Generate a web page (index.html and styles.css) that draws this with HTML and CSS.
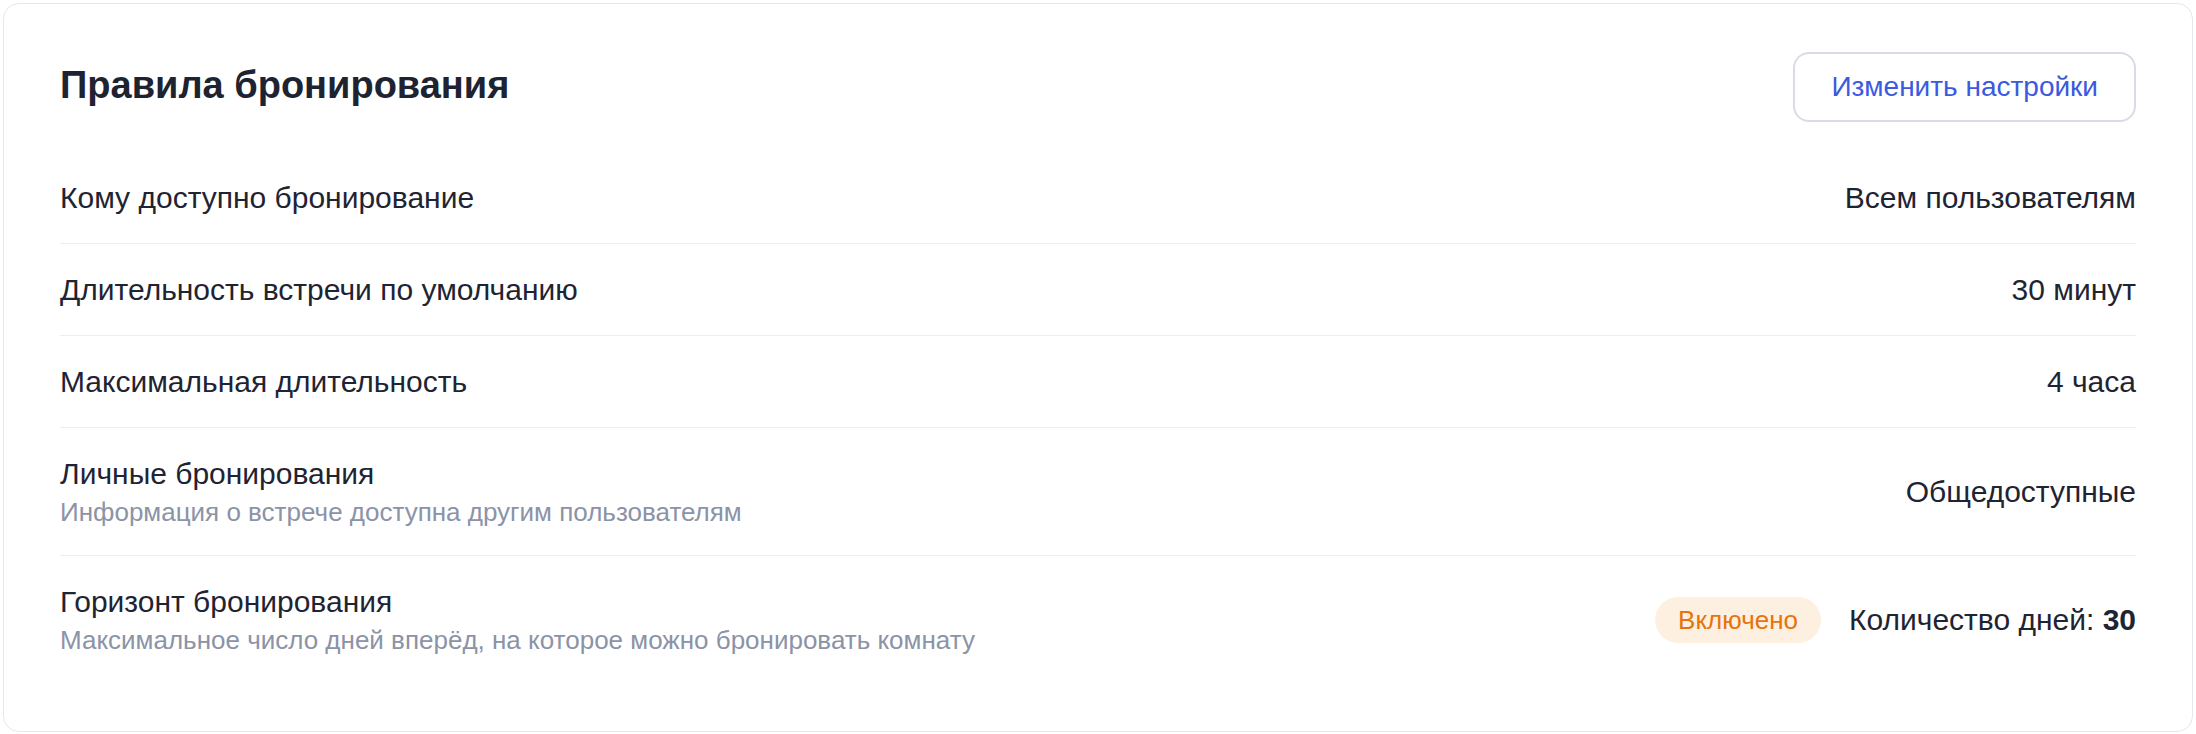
FILE: index.html
```html
<!DOCTYPE html>
<html lang="ru">

<head>
    <meta charset="UTF-8">
    <meta name="viewport" content="width=device-width, initial-scale=1.0">
    <title>Правила бронирования</title>
    <link rel="stylesheet" href="styles.css">
</head>

<body>

    <!-- Карточка правил -->
    <div class="rules-card">
        <div class="rules-header">
            <h2>Правила бронирования</h2>
            <button class="edit-btn">Изменить настройки</button>
        </div>

        <ul class="rules-list">
            <li class="rule-row">
                <div class="rule-label">Кому доступно бронирование</div>
                <div class="rule-value">Всем пользователям</div>
            </li>
            <li class="rule-row">
                <div class="rule-label">Длительность встречи по умолчанию</div>
                <div class="rule-value">30 минут</div>
            </li>
            <li class="rule-row">
                <div class="rule-label">Максимальная длительность</div>
                <div class="rule-value">4 часа</div>
            </li>
            <li class="rule-row">
                <div class="rule-label">
                    Личные бронирования
                    <span class="rule-hint">Информация о встрече доступна другим пользователям</span>
                </div>
                <div class="rule-value">Общедоступные</div>
            </li>
            <li class="rule-row">
                <div class="rule-label">
                    Горизонт бронирования
                    <span class="rule-hint">Максимальное число дней вперёд, на которое можно бронировать комнату</span>
                </div>
                <div class="rule-value">
                    <span class="badge">Включено</span>
                    <span>Количество дней: <b>30</b></span>
                </div>
            </li>
        </ul>
    </div>

</body>

</html>
```

FILE: styles.css
```css
body {
    font-family: 'Liberation Sans', Arial, sans-serif;
    margin: 0;
    padding: 3px;
    background-color: #fff;
    color: #1f2433;
}

.rules-card {
    background: #fff;
    border: 1px solid #e3e7ee;
    border-radius: 16px;
    padding: 48px 56px;
}

.rules-header {
    display: flex;
    justify-content: space-between;
    align-items: center;
    margin-bottom: 30px;
}

.rules-header h2 {
    margin: 0 0 4px;
    font-size: 38px;
    font-weight: 700;
    color: #1e2331;
}

.edit-btn {
    font-family: inherit;
    font-size: 28px;
    color: #3b5ae0;
    background: #fff;
    border: 2px solid #d8dce6;
    border-radius: 16px;
    height: 70px;
    padding: 0 36px;
    cursor: pointer;
}

.rules-list {
    list-style-type: none;
    margin: 0;
    padding: 0;
}

.rule-row {
    display: flex;
    justify-content: space-between;
    align-items: center;
    padding: 25px 0;
    border-bottom: 1px solid #eceef2;
    font-size: 30px;
    line-height: 41px;
}

.rule-row:last-child {
    border-bottom: none;
}

.rule-hint {
    display: block;
    font-size: 26px;
    line-height: 36px;
    color: #8b93a7;
}

.rule-value {
    display: flex;
    align-items: center;
    gap: 28px;
}

.badge {
    background: #fef0e1;
    color: #e5740d;
    font-size: 26px;
    line-height: 46px;
    padding: 0 23px;
    border-radius: 23px;
}

.rule-value b {
    font-weight: 700;
}
```
